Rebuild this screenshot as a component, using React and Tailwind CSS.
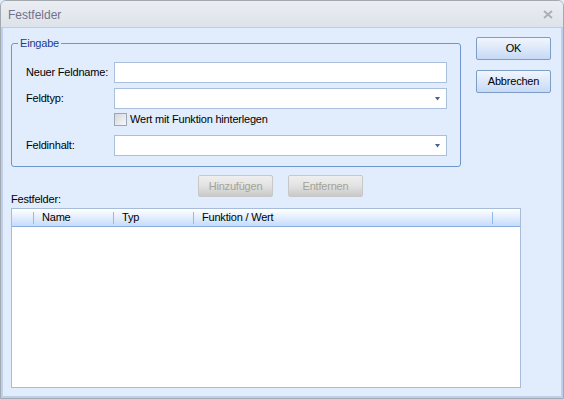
import React from 'react';

const DropArrow = () => (
  <svg width="5" height="4" viewBox="0 0 5 4" className="block">
    <polygon points="0,0 5,0 2.5,3.5" fill="#4b5e8c" />
  </svg>
);

const Field = ({ label, combo, className = '' }) => (
  <div className={`flex items-center h-[21px] ${className}`}>
    <span className="w-[88px]">{label}</span>
    <div className="w-[333px] h-[21px] bg-white border border-[#a9bfdc] flex items-center justify-end pr-[6px]">
      {combo && <DropArrow />}
    </div>
  </div>
);

const Button = ({ children, disabled }) => (
  <button
    type="button"
    className={
      disabled
        ? 'w-[75px] h-[22px] rounded-[2px] border border-[#c8c8c8] bg-linear-to-b from-[#efefef] via-[#e2e2e2] to-[#c9c9c9] text-[#a3a394]'
        : 'w-[75px] h-[23px] rounded-[2px] border border-[#7d9cc6] bg-linear-to-b from-[#f1f6fe] via-[#dce8f9] to-[#c6daf5] text-black'
    }
  >
    {children}
  </button>
);

const Column = ({ width, children }) => (
  <div className={`flex items-center h-full ${width}`}>
    <span className="w-px h-[12px] bg-[#92b9ee]" />
    <span className="pl-[8px]">{children}</span>
  </div>
);

export default function App() {
  return (
    <div className="w-[564px] h-[399px] bg-[#e1ecfc] font-['Liberation_Sans',Arial,sans-serif] text-[11px] leading-[13px] tracking-[-0.2px] text-black">
      <div className="h-full flex flex-col border border-[#a4a9b0] rounded-t-[6px] overflow-hidden">
        {/* title bar */}
        <div className="h-[27px] shrink-0 flex items-center justify-between pl-[7px] pr-[10px] bg-linear-to-b from-[#eaeef3] to-[#dde3ea] border-b border-[#c4cbd4]">
          <span className="mt-[3px] text-[12px] tracking-normal text-[#74718b]">Festfelder</span>
          <svg width="10" height="9" viewBox="0 0 10 9">
            <path d="M1 1 L9 8 M9 1 L1 8" stroke="#a9b0b8" strokeWidth="2" />
          </svg>
        </div>

        {/* client area */}
        <div className="flex-1 flex flex-col border-x-2 border-b-2 border-[#bcd0ee] pl-[8px]">
          <div className="flex items-start">
            {/* Eingabe group */}
            <div className="relative mt-[15px] w-[450px] h-[124px] border border-[#6f95cf] rounded-[3px] pl-[14px] pt-[18px]">
              <span className="absolute -top-[7px] left-[6px] px-[2px] bg-[#e1ecfc] text-[#1a3d8c]">Eingabe</span>
              <Field label="Neuer Feldname:" />
              <Field label="Feldtyp:" combo className="mt-[5px]" />
              <div className="flex items-center h-[13px] mt-[4px] ml-[88px]">
                <span className="w-[13px] h-[13px] border border-[#9ba7b6] bg-linear-to-br from-[#d4d8dc] to-[#f8f8f8]" />
                <span className="ml-[3px]">Wert mit Funktion hinterlegen</span>
              </div>
              <Field label="Feldinhalt:" combo className="mt-[9px]" />
            </div>

            {/* dialog buttons */}
            <div className="ml-[15px] mt-[9px] flex flex-col gap-[10px]">
              <Button>OK</Button>
              <Button>Abbrechen</Button>
            </div>
          </div>

          <div className="flex items-start mt-[8px]">
            <span className="w-[187px] mt-[18px]">Festfelder:</span>
            <div className="flex gap-[15px]">
              <Button disabled>Hinzufügen</Button>
              <Button disabled>Entfernen</Button>
            </div>
          </div>

          {/* list */}
          <div className="mt-[2px] w-[510px] h-[180px] border border-[#a7bcd9] bg-white">
            <div className="h-[18px] flex border-b border-[#88ade3] bg-linear-to-b from-white to-[#c6dcfb]">
              <div className="w-[21px]" />
              <Column width="w-[80px]">Name</Column>
              <Column width="w-[80px]">Typ</Column>
              <Column width="w-[299px]">Funktion / Wert</Column>
              <Column width="flex-1" />
            </div>
          </div>
        </div>
      </div>
    </div>
  );
}
